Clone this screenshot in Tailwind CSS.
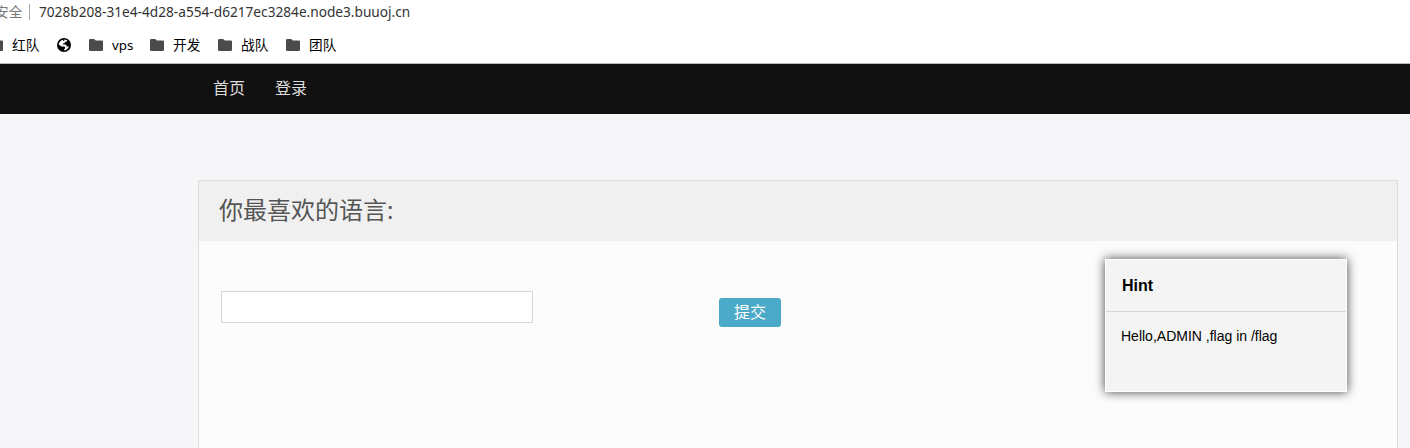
<!DOCTYPE html>
<html lang="zh-CN">
<head>
<meta charset="utf-8">
<title>你最喜欢的语言</title>
<script src="https://cdn.jsdelivr.net/npm/@tailwindcss/browser@4"></script>
</head>
<body class="h-screen overflow-hidden bg-[#f6f6f8] font-['Noto_Sans','Noto_Sans_CJK_SC',sans-serif]">
<svg class="hidden">
  <symbol id="folder" viewBox="0 0 14 12"><path fill="#4b4b4b" d="M1.3 0H5.2L6.8 1.6H12.8Q14 1.6 14 2.8V10.8Q14 12 12.8 12H1.2Q0 12 0 10.8V1.3Q0 0 1.3 0Z"/></symbol>
</svg>
<div class="flex h-screen flex-col overflow-hidden">
  <header class="h-16 shrink-0 border-b border-[#b9b9b9] bg-white whitespace-nowrap">
    <div class="flex h-6 items-center text-[13.66px] leading-6">
      <span class="-ml-[5px] w-[27px] text-[#777]">安全</span>
      <span class="ml-[7px] h-4 w-px bg-[#a5a5a5]"></span>
      <span class="ml-[9px] text-[#333]">7028b208-31e4-4d28-a554-d6217ec3284e.node3.buuoj.cn</span>
    </div>
    <nav class="flex h-[39px] items-center pt-[3px] text-[13.66px] leading-6 text-black">
      <svg class="-ml-[11px] h-3 w-3.5"><use href="#folder"/></svg>
      <span class="ml-[9px] w-[27px]">红队</span>
      <svg class="ml-[18px] h-3.5 w-3.5" viewBox="0 0 14 14"><circle cx="7" cy="7" r="7"/><path fill="#fff" d="M7.6 1.6C8.6 1.6 9.5 1.9 10.3 2.4L9.7 3.6L7.9 4.3L7.6 5.3L5.8 5.6V6.6H8.6L9.6 7.5V8.6H11L11.9 8.2C11.3 10.6 9.5 12.2 7.2 12.4V11.1L8.2 10.2V9.3L7.2 8.6H4.5L1.7 6.4C2 4 3.8 2.2 6.2 1.7L6 2.9L7.2 2.7Z"/></svg>
      <svg class="ml-[18px] h-3 w-3.5"><use href="#folder"/></svg>
      <span class="ml-[9px] w-[21px] text-[13.33px]">vps</span>
      <svg class="ml-[17px] h-3 w-3.5"><use href="#folder"/></svg>
      <span class="ml-[9px] w-[27px]">开发</span>
      <svg class="ml-[18px] h-3 w-3.5"><use href="#folder"/></svg>
      <span class="ml-[9px] w-[27px]">战队</span>
      <svg class="ml-[18px] h-3 w-3.5"><use href="#folder"/></svg>
      <span class="ml-[9px] w-[27px]">团队</span>
    </nav>
  </header>
  <nav class="flex h-[50px] shrink-0 items-center gap-[30px] bg-[#111] pb-0.5 pl-[213px] text-base leading-6 text-[#ddd]">
    <a>首页</a><a>登录</a>
  </nav>
  <main class="mt-[66px] mr-3 ml-[198px] min-h-0 flex-1 border border-b-0 border-[#dcdcdc] bg-[#fcfcfc]">
    <h1 class="h-[60px] bg-[#f0f0f0] pl-5 text-2xl leading-[58px] text-[#555]">你最喜欢的语言:</h1>
    <div class="flex items-start pl-[22px]">
      <input class="mt-[50px] h-8 w-[312px] border border-[#d6d6d6] bg-white">
      <button class="mt-[57px] ml-[186px] h-[29px] w-[62px] rounded-[3px] bg-[#4aaac8] text-base leading-[29px] text-white">提交</button>
      <section class="mt-[18px] ml-[324px] h-[133px] w-[242px] border border-white bg-[#f4f4f4] font-['Liberation_Sans',sans-serif] text-black shadow-[0_0_10px_#444]">
        <h2 class="h-[52px] border-b border-[#d8d8d8] pl-4 text-base leading-[51px] font-bold">Hint</h2>
        <p class="pt-[14px] pl-[15px] text-sm leading-5">Hello,ADMIN ,flag in /flag</p>
      </section>
    </div>
  </main>
</div>
</body>
</html>
